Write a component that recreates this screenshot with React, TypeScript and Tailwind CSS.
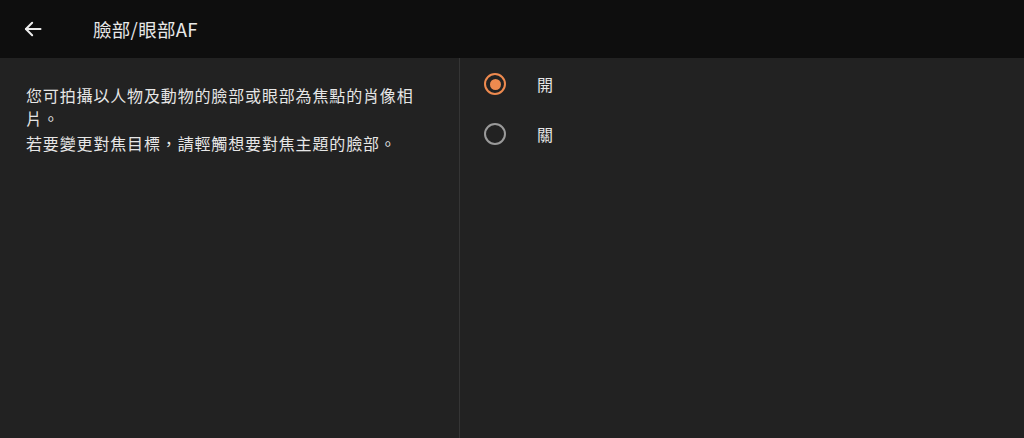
import { useState } from "react";

const font = { fontFamily: '"Noto Sans CJK TC", "Noto Sans", sans-serif' };

export default function App() {
  const [on, setOn] = useState(true);

  return (
    <div className="w-[1024px] h-[438px] bg-[#222222] flex flex-col text-[#e6e6e6]" style={font}>
      {/* header */}
      <div className="h-[58px] bg-[#0e0e0e] flex items-center shrink-0">
        <svg className="ml-[23px] w-[20px] h-[20px]" viewBox="0 0 24 24" fill="none" stroke="#ededed" strokeWidth="2.4" strokeLinecap="round" strokeLinejoin="round">
          <path d="M21 12H3.5" />
          <path d="M11 4.5 3.5 12l7.5 7.5" />
        </svg>
        <h1 className="ml-[50px] text-[18.5px] tracking-[0.3px] leading-none text-[#e8e8e8]">臉部/眼部AF</h1>
      </div>

      <div className="flex flex-1">
        {/* description */}
        <div className="w-[460px] border-r border-[#353535] pl-[26px] pt-[26px]">
          <p className="w-[400px] text-[16px] leading-[23px] tracking-[0.85px]">
            您可拍攝以人物及動物的臉部或眼部為焦點的肖像相片。
          </p>
          <p className="mt-[2px] w-[400px] text-[16px] leading-[23px] tracking-[0.85px]">
            若要變更對焦目標，請輕觸想要對焦主題的臉部。
          </p>
        </div>

        {/* options */}
        <div className="flex-1 flex flex-col pt-[1px]">
          {[
            { label: "開", value: true },
            { label: "關", value: false },
          ].map((o) => {
            const sel = on === o.value;
            return (
              <button
                key={o.label}
                onClick={() => setOn(o.value)}
                className="h-[50px] flex items-center pl-[24px] text-left"
              >
                <span
                  className={`w-[22px] h-[22px] rounded-full border-2 flex items-center justify-center ${
                    sel ? "border-[#ee8a4f]" : "border-[#9a9a9a]"
                  }`}
                >
                  {sel && <span className="w-[11px] h-[11px] rounded-full bg-[#ee8a4f]" />}
                </span>
                <span className="ml-[31px] text-[16px] text-[#e6e6e6]">{o.label}</span>
              </button>
            );
          })}
        </div>
      </div>
    </div>
  );
}
